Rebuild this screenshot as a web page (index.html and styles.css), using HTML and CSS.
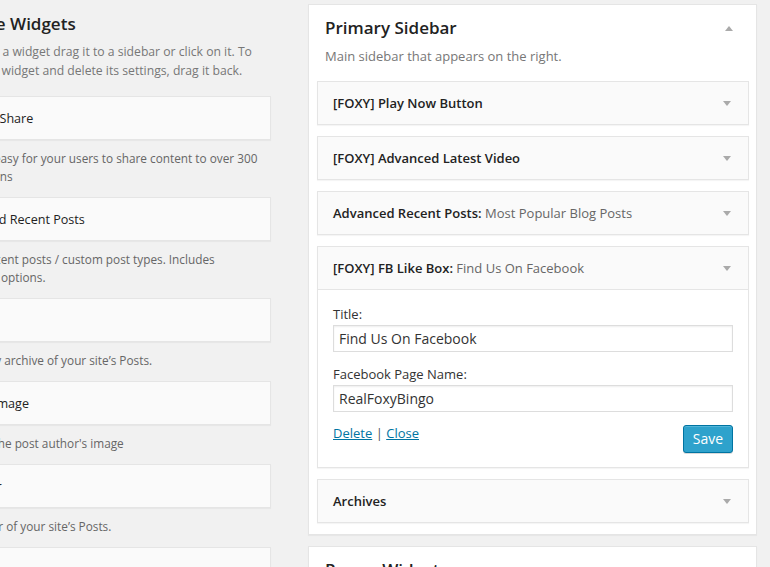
FILE: index.html
```html
<!DOCTYPE html>
<html lang="en">
<head>
<meta charset="utf-8">
<title>Widgets</title>
<link rel="stylesheet" href="styles.css">
</head>
<body>
<div class="page">
  <div class="avail">
    <div class="avail-head">
      <h2 class="avail-title">Available Widgets</h2>
      <p class="avail-desc">To activate a widget drag it to a sidebar or click on it. To<br>deactivate a widget and delete its settings, drag it back.</p>
    </div>
    <ul class="widget-list">
      <li class="avail-widget">
        <div class="avail-top"><h3 class="avail-name">AddThis Share</h3></div>
        <p class="avail-text">Makes it easy for your users to share content to over 300<br>destinations</p>
      </li>
      <li class="avail-widget">
        <div class="avail-top"><h3 class="avail-name">Advanced Recent Posts</h3></div>
        <p class="avail-text">Shows recent posts / custom post types. Includes<br>advanced options.</p>
      </li>
      <li class="avail-widget">
        <div class="avail-top"><h3 class="avail-name">Archives</h3></div>
        <p class="avail-text">A monthly archive of your site’s Posts.</p>
      </li>
      <li class="avail-widget">
        <div class="avail-top"><h3 class="avail-name">Author Image</h3></div>
        <p class="avail-text">Displays the post author's image</p>
      </li>
      <li class="avail-widget">
        <div class="avail-top"><h3 class="avail-name">Calendar</h3></div>
        <p class="avail-text">A calendar of your site’s Posts.</p>
      </li>
      <li class="avail-widget">
        <div class="avail-top"><h3 class="avail-name">Categories</h3></div>
        <p class="avail-text">A list or dropdown of categories.</p>
      </li>
    </ul>
  </div>

  <div class="sidebars">
    <section class="sidebar">
      <div class="sidebar-head">
        <h2 class="sidebar-title">Primary Sidebar</h2>
        <span class="arrow-up"></span>
      </div>
      <p class="sidebar-desc">Main sidebar that appears on the right.</p>

      <div class="widget">
        <div class="widget-top">
          <h3 class="widget-title">[FOXY] Play Now Button</h3>
          <span class="arrow-down"></span>
        </div>
      </div>
      <div class="widget">
        <div class="widget-top">
          <h3 class="widget-title">[FOXY] Advanced Latest Video</h3>
          <span class="arrow-down"></span>
        </div>
      </div>
      <div class="widget">
        <div class="widget-top">
          <h3 class="widget-title">Advanced Recent Posts: <span class="in-title">Most Popular Blog Posts</span></h3>
          <span class="arrow-down"></span>
        </div>
      </div>
      <div class="widget widget-open">
        <div class="widget-top">
          <h3 class="widget-title">[FOXY] FB Like Box: <span class="in-title">Find Us On Facebook</span></h3>
          <span class="arrow-down"></span>
        </div>
        <div class="widget-inside">
          <div class="field">
            <label class="field-label" for="fb-title">Title:</label>
            <input class="field-input" id="fb-title" type="text" value="Find Us On Facebook">
          </div>
          <div class="field">
            <label class="field-label" for="fb-page">Facebook Page Name:</label>
            <input class="field-input" id="fb-page" type="text" value="RealFoxyBingo">
          </div>
          <div class="widget-control">
            <div class="control-links"><a class="link" href="#">Delete</a> <span class="sep">|</span> <a class="link" href="#">Close</a></div>
            <button class="btn-save" type="button">Save</button>
          </div>
        </div>
      </div>
      <div class="widget">
        <div class="widget-top">
          <h3 class="widget-title">Archives</h3>
          <span class="arrow-down"></span>
        </div>
      </div>
    </section>

    <section class="sidebar">
      <div class="sidebar-head">
        <h2 class="sidebar-title">Popup Widgets</h2>
        <span class="arrow-down"></span>
      </div>
      <p class="sidebar-desc">Widgets shown inside the popup.</p>
    </section>
  </div>
</div>
</body>
</html>
```

FILE: styles.css
```css
html, body {
  margin: 0;
  padding: 0;
}

body {
  width: 770px;
  height: 567px;
  overflow: hidden;
  background: #f1f1f1;
  font-family: "Open Sans", "DejaVu Sans", sans-serif;
  font-size: 13px;
  color: #444;
}

.page {
  display: flex;
  align-items: flex-start;
}

/* ---------- Available widgets (left, partly off-screen) ---------- */

.avail {
  flex: 0 0 340px;
  min-width: 0;
  margin-left: -69px;
  padding-top: 12px;
}

.avail-title {
  margin: 0;
  font-size: 17px;
  font-weight: 600;
  line-height: 24px;
  color: #222;
  white-space: nowrap;
}

.avail-desc {
  margin: 6px 0 0 -1px;
  font-size: 12.2px;
  line-height: 19px;
  text-indent: 8px;
  color: #777;
  white-space: nowrap;
}

.widget-list {
  list-style: none;
  margin: 16px 0 0;
  padding: 0;
}

.avail-top {
  height: 42px;
  border: 1px solid #e5e5e5;
  background: #fafafa;
  box-shadow: 0 1px 1px rgba(0, 0, 0, 0.04);
  display: flex;
  align-items: center;
  padding-left: 17px;
}

.avail-name {
  margin: 0;
  font-size: 12.6px;
  font-weight: 400;
  color: #222;
  white-space: nowrap;
}

.avail-text {
  margin: 0;
  padding: 9px 0 12px 14px;
  font-size: 11.8px;
  line-height: 18px;
  color: #666;
  white-space: nowrap;
}

/* ---------- Sidebars (right) ---------- */

.sidebars {
  flex: 0 0 449px;
  min-width: 0;
  margin-left: 37px;
  padding-top: 4px;
}

.sidebar {
  background: #fff;
  border: 1px solid #e5e5e5;
  box-shadow: 0 1px 1px rgba(0, 0, 0, 0.04);
  padding: 0 7px 0 8px;
  margin-bottom: 11px;
}

.sidebar-head {
  display: flex;
  align-items: center;
  justify-content: space-between;
  padding: 11px 16px 0 8px;
}

.sidebar-title {
  margin: 0;
  font-size: 17px;
  font-weight: 600;
  line-height: 24px;
  color: #222;
}

.sidebar-desc {
  margin: 7px 0 15px;
  padding-left: 8px;
  line-height: 19px;
  color: #777;
}

.arrow-up {
  width: 0;
  height: 0;
  border-left: 4px solid transparent;
  border-right: 4px solid transparent;
  border-bottom: 5px solid #aaa;
}

.arrow-down {
  width: 0;
  height: 0;
  border-left: 4px solid transparent;
  border-right: 4px solid transparent;
  border-top: 5px solid #aaa;
}

.widget {
  border: 1px solid #e5e5e5;
  background: #fafafa;
  box-shadow: 0 1px 1px rgba(0, 0, 0, 0.04);
  margin-bottom: 11px;
}

.widget-top {
  height: 42px;
  display: flex;
  align-items: center;
  justify-content: space-between;
  padding: 0 17px 0 15px;
}

.widget-title {
  margin: 0;
  font-size: 13px;
  font-weight: 600;
  color: #222;
  white-space: nowrap;
}

.in-title {
  font-weight: 400;
  color: #666;
}

.widget-open .widget-top {
  border-bottom: 1px solid #e5e5e5;
}

.widget-inside {
  background: #fff;
  padding: 15px 15px 14px;
}

.field + .field {
  margin-top: 13px;
}

.field-label {
  display: block;
  line-height: 19px;
  color: #333;
}

.field-input {
  display: block;
  box-sizing: border-box;
  width: 100%;
  height: 27px;
  margin: 1px 0 0;
  padding: 0 5px;
  border: 1px solid #ddd;
  background: #fff;
  box-shadow: inset 0 1px 2px rgba(0, 0, 0, 0.07);
  font-family: "Open Sans", "DejaVu Sans", sans-serif;
  font-size: 14px;
  color: #333;
  outline: none;
}

.widget-control {
  display: flex;
  justify-content: space-between;
  align-items: flex-start;
  margin-top: 13px;
}

.control-links {
  line-height: 19px;
  margin-top: -1px;
  color: #555;
}

.link {
  color: #0074a2;
  text-decoration: underline;
}

.btn-save {
  width: 50px;
  height: 28px;
  padding: 0;
  border: 1px solid #0074a2;
  border-radius: 3px;
  background: #2ea2cc;
  box-shadow: inset 0 1px 0 rgba(120, 200, 230, 0.5), 0 1px 0 rgba(0, 0, 0, 0.15);
  color: #fff;
  font-family: "Open Sans", "DejaVu Sans", sans-serif;
  font-size: 14px;
  line-height: 26px;
  cursor: pointer;
}
```
